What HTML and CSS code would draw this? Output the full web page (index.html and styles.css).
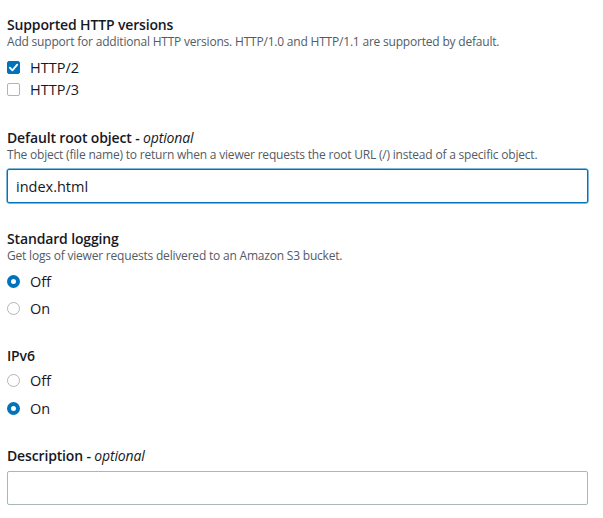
FILE: index.html
```html
<!DOCTYPE html>
<html>
<head>
<meta charset="utf-8">
<link rel="stylesheet" href="styles.css">
</head>
<body>
<div class="form">
  <section class="field s1">
    <div class="title">Supported HTTP versions</div>
    <div class="desc">Add support for additional HTTP versions. HTTP/1.0 and HTTP/1.1 are supported by default.</div>
    <div class="options checks">
      <label class="opt"><span class="box checked"><svg viewBox="0 0 14 14" width="13" height="13"><path d="M3 7.2 L5.8 10 L11 4" fill="none" stroke="#fff" stroke-width="2" stroke-linecap="round" stroke-linejoin="round"/></svg></span>HTTP/2</label>
      <label class="opt"><span class="box"></span>HTTP/3</label>
    </div>
  </section>
  <section class="field s2">
    <div class="title">Default root object - <em>optional</em></div>
    <div class="desc">The object (file name) to return when a viewer requests the root URL (/) instead of a specific object.</div>
    <div class="input focus">index.html</div>
  </section>
  <section class="field s3">
    <div class="title">Standard logging</div>
    <div class="desc">Get logs of viewer requests delivered to an Amazon S3 bucket.</div>
    <div class="options radios after-desc">
      <label class="opt"><span class="radio on"></span>Off</label>
      <label class="opt"><span class="radio"></span>On</label>
    </div>
  </section>
  <section class="field s4">
    <div class="title">IPv6</div>
    <div class="options radios">
      <label class="opt"><span class="radio"></span>Off</label>
      <label class="opt"><span class="radio on"></span>On</label>
    </div>
  </section>
  <section class="field s5">
    <div class="title">Description - <em>optional</em></div>
    <div class="input"></div>
  </section>
</div>
</body>
</html>
```
FILE: styles.css
```css
html, body {
  margin: 0;
  padding: 0;
  background: #fff;
}
body {
  font-family: "Open Sans", "Noto Sans", Arial, sans-serif;
  color: #16191f;
  width: 603px;
  height: 518px;
  overflow: hidden;
}
.form {
  display: flex;
  flex-direction: column;
  padding: 15px 15px 0 7px;
}
.field {
  display: flex;
  flex-direction: column;
}
.s2 { margin-top: 28px; }
.s3 { margin-top: 26px; }
.s4 { margin-top: 23.5px; }
.s5 { margin-top: 24px; }
.title {
  font-size: 14px;
  line-height: 19px;
  font-weight: 600;
  letter-spacing: -0.15px;
}
.title em {
  font-weight: 400;
  font-style: italic;
}
.desc {
  font-size: 12px;
  line-height: 16px;
  color: #545b64;
  letter-spacing: -0.2px;
}
.options {
  display: flex;
  flex-direction: column;
}
.checks { margin-top: 6px; }
.checks .opt { height: 22px; }
.radios { margin-top: 2px; }
.radios.after-desc { margin-top: 3.5px; }
.radios .opt { height: 27.5px; }
.opt {
  display: flex;
  align-items: center;
  font-size: 14.5px;
  color: #16191f;
}
.box {
  width: 13px;
  height: 13px;
  box-sizing: border-box;
  border: 1.5px solid #aab7b8;
  border-radius: 2px;
  margin-right: 10px;
  display: flex;
  align-items: center;
  justify-content: center;
}
.box.checked {
  background: #0073bb;
  border-color: #0073bb;
}
.box svg { flex: none; }
.radio {
  width: 13px;
  height: 13px;
  box-sizing: border-box;
  border: 1.5px solid #aab7b8;
  border-radius: 50%;
  margin-right: 10px;
  background: #fff;
}
.radio.on {
  border: 4px solid #0073bb;
}
.input {
  margin-top: 6px;
  height: 34px;
  box-sizing: border-box;
  border: 1px solid #aab7b8;
  border-radius: 2px;
  padding: 0 8px;
  font-size: 14.5px;
  display: flex;
  align-items: center;
}
.input.focus {
  border-color: #0073bb;
  box-shadow: 0 0 0 0.5px #0073bb;
}
```
